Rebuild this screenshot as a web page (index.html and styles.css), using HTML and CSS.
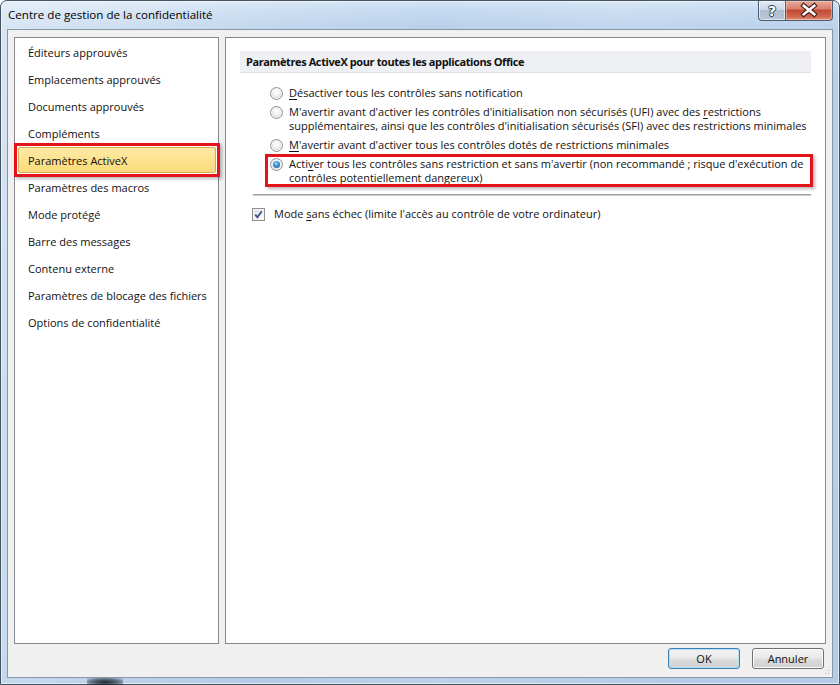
FILE: index.html
```html
<!DOCTYPE html>
<html lang="fr">
<head>
<meta charset="utf-8">
<title>Centre de gestion de la confidentialité</title>
<link rel="stylesheet" href="styles.css">
</head>
<body>
<div class="window">
  <div class="titlebar">
    <span class="title">Centre de gestion de la confidentialité</span>
    <div class="caption-buttons">
      <div class="cbtn help"><span class="help-glyph">?</span></div>
      <div class="cbtn close">
        <svg width="48" height="19" viewBox="0 0 48 19">
          <path d="M18.5 4.5 L29.5 13.5 M29.5 4.5 L18.5 13.5" stroke="#4a2420" stroke-width="5" stroke-linecap="square" fill="none"/>
          <path d="M18.5 4.5 L29.5 13.5 M29.5 4.5 L18.5 13.5" stroke="#ffffff" stroke-width="2.6" stroke-linecap="square" fill="none"/>
        </svg>
      </div>
    </div>
  </div>
  <div class="client">
    <div class="panes">
      <ul class="nav">
        <li class="nav-item">Éditeurs approuvés</li>
        <li class="nav-item">Emplacements approuvés</li>
        <li class="nav-item">Documents approuvés</li>
        <li class="nav-item">Compléments</li>
        <li class="nav-item selected">Paramètres ActiveX</li>
        <li class="nav-item">Paramètres des macros</li>
        <li class="nav-item">Mode protégé</li>
        <li class="nav-item">Barre des messages</li>
        <li class="nav-item">Contenu externe</li>
        <li class="nav-item">Paramètres de blocage des fichiers</li>
        <li class="nav-item">Options de confidentialité</li>
      </ul>
      <div class="content">
        <div class="section-header">Paramètres ActiveX pour toutes les applications Office</div>
        <div class="options">
          <div class="option">
            <span class="radio"></span>
            <span class="option-label"><u>D</u>ésactiver tous les contrôles sans notification</span>
          </div>
          <div class="option">
            <span class="radio"></span>
            <span class="option-label">M'avertir avant d'activer les contrôles d'initialisation non sécurisés (UFI) avec des <u>r</u>estrictions<br>supplémentaires, ainsi que les contrôles d'initialisation sécurisés (SFI) avec des restrictions minimales</span>
          </div>
          <div class="option">
            <span class="radio"></span>
            <span class="option-label"><u>M</u>'avertir avant d'activer tous les contrôles dotés de restrictions minimales</span>
          </div>
          <div class="option flagged">
            <span class="radio checked"></span>
            <span class="option-label">Acti<u>v</u>er tous les contrôles sans restriction et sans m'avertir (non recommandé ; risque d'exécution de<br>contrôles potentiellement dangereux)</span>
          </div>
        </div>
        <div class="separator"></div>
        <div class="check-row">
          <span class="checkbox">
            <svg width="11" height="11" viewBox="0 0 11 11">
              <path d="M2.2 5.6 L4.4 8.2 L8.8 2.2" stroke="#3b4f8c" stroke-width="1.8" fill="none"/>
            </svg>
          </span>
          <span class="check-label">Mode <u>s</u>ans échec (limite l'accès au contrôle de votre ordinateur)</span>
        </div>
      </div>
    </div>
    <div class="footer">
      <button class="btn default">OK</button>
      <button class="btn">Annuler</button>
      <span class="grip"></span>
    </div>
  </div>
  <span class="frame-shade"></span>
</div>
</body>
</html>
```
FILE: styles.css
```css
* { box-sizing: border-box; }
html, body { margin: 0; padding: 0; }
body {
  width: 840px;
  height: 685px;
  background: #ffffff;
  font-family: "Open Sans", "Noto Sans", sans-serif;
  font-size: 11px;
  color: #111111;
  overflow: hidden;
}

.window {
  position: relative;
  width: 840px;
  height: 685px;
  border: 1px solid #45525f;
  border-radius: 7px 7px 0 0;
  background:
    linear-gradient(105deg, rgba(255,255,255,0.45) 0px, rgba(255,255,255,0.15) 260px, rgba(255,255,255,0) 420px, rgba(255,255,255,0.12) 600px, rgba(255,255,255,0) 840px),
    linear-gradient(180deg, #d3e3f4 0px, #c2d8ef 12px, #b8d0ea 28px, #b4cce7 100%);
  box-shadow: inset 0 0 0 1px rgba(255,255,255,0.55);
  display: flex;
  flex-direction: column;
}

.titlebar {
  height: 28px;
  display: flex;
  align-items: flex-start;
  padding-left: 7px;
}
.title {
  line-height: 28px;
  color: #000;
  font-size: 11.6px;
}
.caption-buttons {
  margin-left: auto;
  margin-right: 6px;
  display: flex;
}
.cbtn {
  height: 20px;
  border: 1px solid #4d5e71;
  border-top: none;
  display: flex;
  align-items: center;
  justify-content: center;
}
.help {
  width: 27px;
  border-right: none;
  border-radius: 0 0 0 4px;
  background: linear-gradient(180deg, #e3ebf4 0%, #cbd7e5 45%, #aebdcf 50%, #b8c8da 100%);
  box-shadow: inset 0 0 0 1px rgba(255,255,255,0.55);
}
.help-glyph {
  font-family: "DejaVu Sans", sans-serif;
  font-weight: bold;
  font-size: 14px;
  line-height: 14px;
  color: #ffffff;
  text-shadow: 1px 0 0 #2f3c4c, -1px 0 0 #2f3c4c, 0 1px 0 #2f3c4c, 0 -1px 0 #2f3c4c;
}
.close {
  width: 48px;
  border-radius: 0 0 4px 0;
  background: linear-gradient(180deg, #e9a99b 0%, #d9806e 40%, #c24a33 50%, #d26a52 85%, #e39a84 100%);
  box-shadow: inset 0 0 0 1px rgba(255,220,210,0.45);
}
.close svg { display: block; }

.client {
  flex: 1;
  min-height: 0;
  margin: 0 6px 6px 6px;
  background: #f0f0f0;
  border: 1px solid #8797a8;
  display: flex;
  flex-direction: column;
}
.panes {
  flex: 1;
  min-height: 0;
  display: flex;
  gap: 6px;
  padding: 7px 6px 0 6px;
}

.nav {
  flex: none;
  list-style: none;
  margin: 0;
  width: 205px;
  padding: 1px 0 0 0;
  background: #ffffff;
  border: 1px solid #828790;
}
.nav-item {
  position: relative;
  height: 27px;
  line-height: 27px;
  margin: 0 2px 0 3px;
  padding-left: 10px;
  white-space: nowrap;
}
.nav-item.selected {
  height: 26px;
  margin-bottom: 1px;
  background: linear-gradient(180deg, #feeaa8 0%, #fde390 45%, #fbdb7b 100%);
  border: 1px solid #cfae5a;
  border-radius: 2px;
  padding-left: 9px;
  line-height: 25px;
}
.nav-item.selected::after {
  content: "";
  position: absolute;
  left: -5px;
  top: -5px;
  right: -5px;
  bottom: -5px;
  border: 3px solid #e5141b;
  box-shadow: 2px 2px 3px rgba(0,0,0,0.28);
}

.content {
  flex: 1;
  min-width: 0;
  overflow: hidden;
  background: #ffffff;
  border: 1px solid #828790;
  padding: 13px 14px 0 14px;
}
.section-header {
  height: 22px;
  line-height: 21px;
  background: #eef0f3;
  border-bottom: 1px solid #dfe2e7;
  padding-left: 6px;
  font-weight: bold;
  letter-spacing: -0.4px;
}
.options {
  margin: 13px 0 0 30px;
  display: flex;
  flex-direction: column;
  gap: 5px;
}
.option {
  position: relative;
  display: flex;
  align-items: flex-start;
  line-height: 14px;
  white-space: nowrap;
}
.option.flagged::after {
  content: "";
  position: absolute;
  left: -5px;
  top: -3px;
  right: -2px;
  bottom: -2px;
  border: 3px solid #e5141b;
  box-shadow: 2px 2px 3px rgba(0,0,0,0.28);
}
.radio {
  flex: none;
  width: 13px;
  height: 13px;
  margin: 1px 6px 0 0;
  border-radius: 50%;
  border: 1px solid #8f949a;
  background: radial-gradient(circle at 50% 40%, #ffffff 0%, #f3f3f3 35%, #d6d8db 75%, #c9ccd0 100%);
  box-shadow: inset 0 0 0 1px #f4f4f4;
  position: relative;
}
.radio.checked::after {
  content: "";
  position: absolute;
  left: 2px;
  top: 2px;
  width: 7px;
  height: 7px;
  border-radius: 50%;
  background: radial-gradient(circle at 45% 35%, #9fe0ff 0%, #3f9ad8 40%, #1c4f86 100%);
}
.option-label u, .check-label u { text-decoration-thickness: 1px; text-underline-offset: 2px; }

.separator {
  margin: 9px 0 0 13px;
  height: 2px;
  border-top: 1px solid #a0a0a0;
  border-bottom: 1px solid #c9c9c9;
}
.check-row {
  margin: 11px 0 0 12px;
  display: flex;
  align-items: flex-start;
  line-height: 14px;
  white-space: nowrap;
}
.checkbox {
  flex: none;
  width: 13px;
  height: 13px;
  margin: 1px 9px 0 0;
  border: 1px solid #8e8f8f;
  background: linear-gradient(135deg, #dcdcdc 0%, #f4f4f4 60%, #ffffff 100%);
  box-shadow: inset 0 0 0 1px #f6f6f6;
  display: flex;
  align-items: center;
  justify-content: center;
}
.checkbox svg { display: block; }

.footer {
  position: relative;
  height: 33px;
  display: flex;
  justify-content: flex-end;
  align-items: flex-start;
  gap: 12px;
  padding: 4px 8px 0 0;
}
.btn {
  width: 72px;
  height: 21px;
  padding: 0;
  font-family: inherit;
  font-size: 11px;
  color: #111111;
  border: 1px solid #707070;
  border-radius: 3px;
  background: linear-gradient(180deg, #f2f2f2 0%, #ebebeb 48%, #dddddd 52%, #cfcfcf 100%);
  box-shadow: inset 0 0 0 1px #fbfbfb;
}
.btn.default {
  border-color: #3c7fb1;
  box-shadow: inset 0 0 0 1px #b4def5;
}
.grip {
  position: absolute;
  right: 1px;
  bottom: 1px;
  width: 10px;
  height: 10px;
  background: radial-gradient(circle, #a8a8a8 0.8px, transparent 1px) 0 0 / 3px 3px;
  clip-path: polygon(100% 0, 100% 100%, 0 100%);
}
.frame-shade {
  position: absolute;
  left: 86px;
  bottom: -1px;
  width: 36px;
  height: 7px;
  background: radial-gradient(ellipse at 50% 60%, rgba(10,20,30,0.9) 0%, rgba(10,20,30,0.5) 55%, rgba(10,20,30,0) 100%);
}
```
